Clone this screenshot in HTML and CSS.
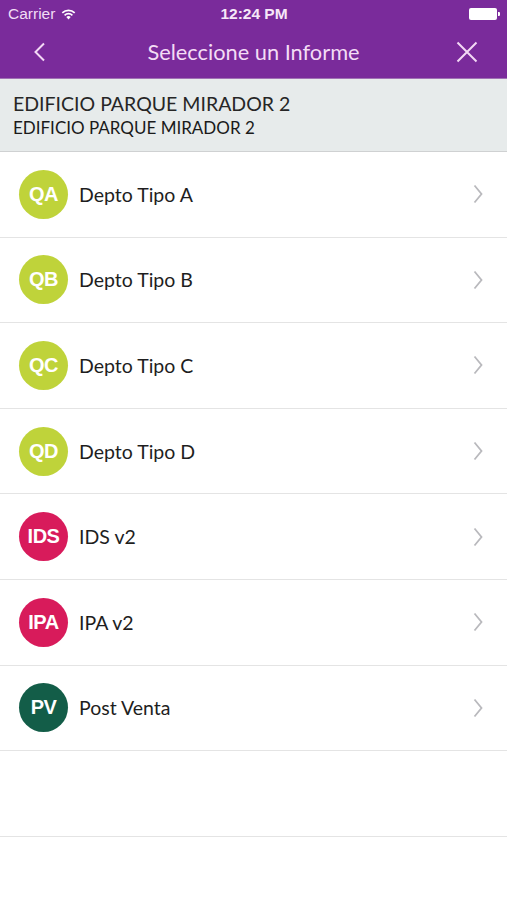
FILE: index.html
```html
<!doctype html>
<html lang="es">
  <head>
    <meta charset="UTF-8" />
    <meta name="viewport" content="width=device-width, initial-scale=1.0" />
    <title>Seleccione un Informe</title>
    <link rel="stylesheet" href="styles.css">
  </head>
  <body>
    <div class="app">
      <div class="topbar">
        <div class="statusbar">
          <div class="carrier">
            Carrier
            <svg class="wifi" width="15" height="11" viewBox="0 0 15 11">
              <path d="M7.5 10.5 L5.3 8.1 A3.2 3.2 0 0 1 9.7 8.1 Z" fill="#fff" />
              <path d="M3.6 6.3 A5.6 5.6 0 0 1 11.4 6.3" stroke="#fff" stroke-width="1.7" fill="none" />
              <path d="M1.3 3.9 A8.8 8.8 0 0 1 13.7 3.9" stroke="#fff" stroke-width="1.7" fill="none" />
            </svg>
          </div>
          <div class="clock">12:24 PM</div>
          <div class="battery">
            <div class="battery-body"></div>
            <div class="battery-nub"></div>
          </div>
        </div>
        <div class="navbar">
          <button class="nav-btn">
            <svg width="14" height="20" viewBox="0 0 14 20">
              <path d="M11 1.5 L2.5 10 L11 18.5" stroke="#f3d9f5" stroke-width="2" fill="none" />
            </svg>
          </button>
          <h1>Seleccione un Informe</h1>
          <button class="nav-btn">
            <svg width="22" height="22" viewBox="0 0 22 22">
              <path d="M1.5 1.5 L20.5 20.5 M20.5 1.5 L1.5 20.5" stroke="#f3d9f5" stroke-width="2" fill="none" />
            </svg>
          </button>
        </div>
      </div>

      <div class="project">
        <div class="project-name">EDIFICIO PARQUE MIRADOR 2</div>
        <div class="project-sub">EDIFICIO PARQUE MIRADOR 2</div>
      </div>

      <ul class="reports">
        <li class="report">
          <div class="badge lime">QA</div>
          <span class="label">Depto Tipo A</span>
          <svg class="chevron" width="10" height="20" viewBox="0 0 10 20">
            <path d="M1.5 1.5 L8.5 10 L1.5 18.5" stroke="#b9b9bd" stroke-width="1.8" fill="none" />
          </svg>
        </li>
        <li class="report">
          <div class="badge lime">QB</div>
          <span class="label">Depto Tipo B</span>
          <svg class="chevron" width="10" height="20" viewBox="0 0 10 20">
            <path d="M1.5 1.5 L8.5 10 L1.5 18.5" stroke="#b9b9bd" stroke-width="1.8" fill="none" />
          </svg>
        </li>
        <li class="report">
          <div class="badge lime">QC</div>
          <span class="label">Depto Tipo C</span>
          <svg class="chevron" width="10" height="20" viewBox="0 0 10 20">
            <path d="M1.5 1.5 L8.5 10 L1.5 18.5" stroke="#b9b9bd" stroke-width="1.8" fill="none" />
          </svg>
        </li>
        <li class="report">
          <div class="badge lime">QD</div>
          <span class="label">Depto Tipo D</span>
          <svg class="chevron" width="10" height="20" viewBox="0 0 10 20">
            <path d="M1.5 1.5 L8.5 10 L1.5 18.5" stroke="#b9b9bd" stroke-width="1.8" fill="none" />
          </svg>
        </li>
        <li class="report">
          <div class="badge pink">IDS</div>
          <span class="label">IDS v2</span>
          <svg class="chevron" width="10" height="20" viewBox="0 0 10 20">
            <path d="M1.5 1.5 L8.5 10 L1.5 18.5" stroke="#b9b9bd" stroke-width="1.8" fill="none" />
          </svg>
        </li>
        <li class="report">
          <div class="badge pink">IPA</div>
          <span class="label">IPA v2</span>
          <svg class="chevron" width="10" height="20" viewBox="0 0 10 20">
            <path d="M1.5 1.5 L8.5 10 L1.5 18.5" stroke="#b9b9bd" stroke-width="1.8" fill="none" />
          </svg>
        </li>
        <li class="report">
          <div class="badge green">PV</div>
          <span class="label">Post Venta</span>
          <svg class="chevron" width="10" height="20" viewBox="0 0 10 20">
            <path d="M1.5 1.5 L8.5 10 L1.5 18.5" stroke="#b9b9bd" stroke-width="1.8" fill="none" />
          </svg>
        </li>
        <li class="report empty"></li>
      </ul>
    </div>
  </body>
</html>
```

FILE: styles.css
```css
* {
  box-sizing: border-box;
}

body {
  margin: 0;
  padding: 0;
  background-color: #fff;
  font-family: Lato, "Liberation Sans", sans-serif;
  color: #1e1e1e;
}

.app {
  width: 507px;
  min-height: 900px;
  display: flex;
  flex-direction: column;
}

.topbar {
  background-color: #7a2b9b;
  color: #fff;
}

.statusbar {
  height: 28px;
  display: flex;
  align-items: center;
  justify-content: space-between;
  padding: 0 7px 0 8px;
  font-family: "Liberation Sans", sans-serif;
  font-size: 15.5px;
}
.carrier {
  display: flex;
  align-items: center;
  gap: 6px;
  width: 120px;
  color: #f1dcf5;
}
.clock {
  font-weight: bold;
  color: #f6e8f8;
}
.battery {
  width: 120px;
  display: flex;
  justify-content: flex-end;
  align-items: center;
}
.battery-body {
  width: 28px;
  height: 12px;
  border-radius: 2px;
  background-color: #fff;
}
.battery-nub {
  width: 2px;
  height: 4px;
  border-radius: 0 1px 1px 0;
  background-color: #fff;
  margin-left: 1px;
}

.navbar {
  height: 51px;
  display: flex;
  align-items: center;
  justify-content: space-between;
  padding: 0 29px 3px 33px;
  border-bottom: 1px solid #a072b4;
}
.navbar h1 {
  margin: 0;
  font-size: 21.8px;
  font-weight: normal;
  color: #f3dcf5;
  margin-left: 4px;
}
.nav-btn {
  display: flex;
  align-items: center;
  background: transparent;
  border: 0;
  padding: 0;
  cursor: pointer;
}

.project {
  height: 73px;
  padding: 12px 13px 0;
  background-color: #e7ebeb;
  border-bottom: 1px solid #cfd1d2;
}
.project-name {
  font-size: 19.5px;
  line-height: 25px;
  color: #262626;
}
.project-sub {
  font-size: 17px;
  line-height: 24px;
  color: #1a1a1a;
}

.reports {
  list-style: none;
  margin: 0;
  padding: 0;
}
.report {
  height: 85.6px;
  display: flex;
  align-items: center;
  padding: 0 24px 0 19px;
  border-bottom: 1px solid #e4e4e4;
}
.badge {
  width: 49px;
  height: 49px;
  border-radius: 50%;
  display: flex;
  align-items: center;
  justify-content: center;
  font-family: "Liberation Sans", sans-serif;
  font-weight: bold;
  font-size: 20px;
  letter-spacing: -0.5px;
  color: #fff;
  flex-shrink: 0;
}
.badge.lime {
  background-color: #bfd33a;
}
.badge.pink {
  background-color: #d81b5b;
}
.badge.green {
  background-color: #135d48;
}
.label {
  margin-left: 11px;
  font-size: 19.5px;
  flex: 1;
}
.chevron {
  flex-shrink: 0;
}
```
